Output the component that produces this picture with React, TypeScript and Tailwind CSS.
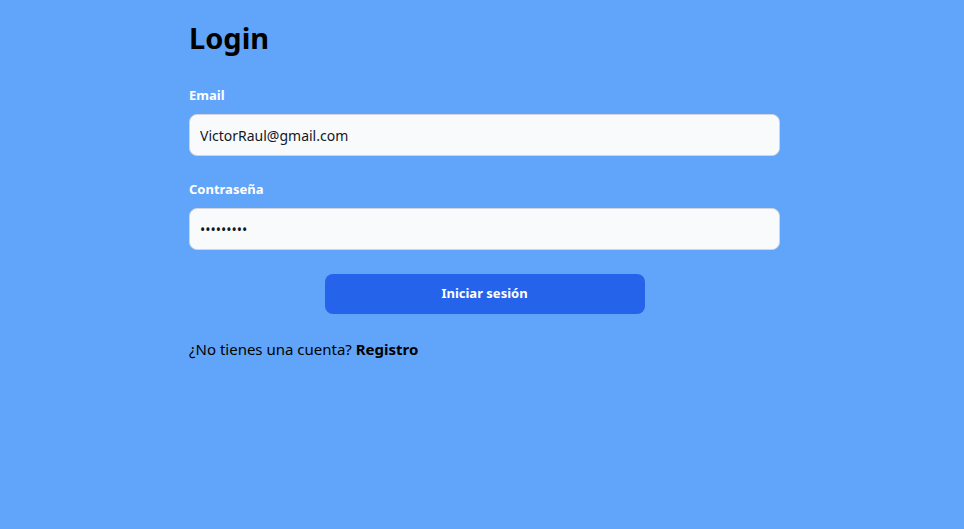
export default function App() {
  return (
    <div className="min-h-screen w-full bg-[#60a5fa]" style={{ fontFamily: '"Noto Sans", "Open Sans", sans-serif' }}>
      <div className="mx-auto w-[596px] pl-[5px] pt-[16px]">
        <h1 className="text-[29px] font-bold leading-[44px] text-black">Login</h1>
        <form className="mt-[26px] flex flex-col" onSubmit={(e) => e.preventDefault()}>
          <label className="text-[13px] font-bold leading-[18px] text-white">Email</label>
          <input
            type="email"
            defaultValue="VictorRaul@gmail.com"
            className="mt-[10px] h-[42px] w-full rounded-lg border border-[#d1d5db] bg-[#f9fafb] px-[10px] text-[14px] text-[#111827] outline-none"
          />
          <label className="mt-[24px] text-[13px] font-bold leading-[18px] text-white">Contraseña</label>
          <input
            type="password"
            defaultValue="123456789"
            className="mt-[10px] h-[42px] w-full rounded-lg border border-[#d1d5db] bg-[#f9fafb] px-[10px] text-[14px] text-[#111827] outline-none"
          />
          <button
            type="submit"
            className="mx-auto mt-[24px] h-[40px] w-[320px] rounded-lg bg-[#2563eb] text-[13px] font-bold text-white"
          >
            Iniciar sesión
          </button>
        </form>
        <p className="mt-[24px] text-[15px] leading-[22px] text-black">
          ¿No tienes una cuenta? <a className="font-bold">Registro</a>
        </p>
      </div>
    </div>
  );
}
